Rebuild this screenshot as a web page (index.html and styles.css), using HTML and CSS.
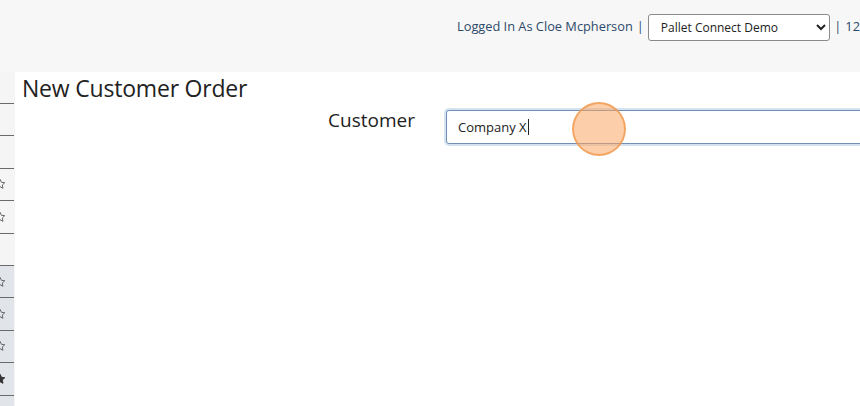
FILE: index.html
```html
<!DOCTYPE html>
<html>
<head>
  <meta charset="UTF-8">
  <title>New Customer Order</title>
  <link rel="stylesheet" href="styles.css">
</head>
<body>
  <div class="topbar">
    <span class="user">Logged In As Cloe Mcpherson</span>
    <span class="pipe">|</span>
    <select class="company">
      <option>Pallet Connect Demo</option>
    </select>
    <span class="pipe">|</span>
    <span class="user">12</span>
  </div>

  <div class="main">
    <div class="sidebar">
      <div class="nav-item"></div>
      <div class="nav-item"></div>
      <div class="nav-item"><svg class="star" viewBox="0 0 24 24"><path d="M12 2.5l2.9 6.1 6.6.8-4.9 4.6 1.3 6.6L12 17.3l-5.9 3.3 1.3-6.6-4.9-4.6 6.6-.8z"/></svg></div>
      <div class="nav-item"><svg class="star" viewBox="0 0 24 24"><path d="M12 2.5l2.9 6.1 6.6.8-4.9 4.6 1.3 6.6L12 17.3l-5.9 3.3 1.3-6.6-4.9-4.6 6.6-.8z"/></svg></div>
      <div class="nav-item"></div>
      <div class="nav-item shaded"><svg class="star" viewBox="0 0 24 24"><path d="M12 2.5l2.9 6.1 6.6.8-4.9 4.6 1.3 6.6L12 17.3l-5.9 3.3 1.3-6.6-4.9-4.6 6.6-.8z"/></svg></div>
      <div class="nav-item shaded"><svg class="star" viewBox="0 0 24 24"><path d="M12 2.5l2.9 6.1 6.6.8-4.9 4.6 1.3 6.6L12 17.3l-5.9 3.3 1.3-6.6-4.9-4.6 6.6-.8z"/></svg></div>
      <div class="nav-item shaded"><svg class="star" viewBox="0 0 24 24"><path d="M12 2.5l2.9 6.1 6.6.8-4.9 4.6 1.3 6.6L12 17.3l-5.9 3.3 1.3-6.6-4.9-4.6 6.6-.8z"/></svg></div>
      <div class="nav-item shaded"><svg class="star filled" viewBox="0 0 24 24"><path d="M12 2.5l2.9 6.1 6.6.8-4.9 4.6 1.3 6.6L12 17.3l-5.9 3.3 1.3-6.6-4.9-4.6 6.6-.8z"/></svg></div>
      <div class="nav-item shaded"><svg class="star" viewBox="0 0 24 24"><path d="M12 2.5l2.9 6.1 6.6.8-4.9 4.6 1.3 6.6L12 17.3l-5.9 3.3 1.3-6.6-4.9-4.6 6.6-.8z"/></svg></div>
    </div>

    <div class="content">
      <h1>New Customer Order</h1>
      <div class="form-row">
        <label for="customer">Customer</label>
        <div class="field">
          <input id="customer" type="text" value="Company X">
          <span class="caret"></span>
          <span class="click-marker"></span>
        </div>
      </div>
    </div>
  </div>
</body>
</html>
```

FILE: styles.css
```css
body * {
  box-sizing: border-box;
}

body {
  margin: 0;
  height: 406px;
  overflow: hidden;
  background: #f7f7f7;
  font-family: "Open Sans", "Liberation Sans", sans-serif;
  color: #2a2a2a;
}

.topbar {
  height: 72px;
  display: flex;
  align-items: flex-start;
  padding: 14px 0 0 457px;
  white-space: nowrap;
}

.user,
.pipe {
  font-size: 12.8px;
  line-height: 24px;
  color: #2d4a6a;
}

.pipe {
  margin: 0 4px 0 4px;
}

.company {
  width: 183px;
  height: 27px;
  padding: 0 8px;
  font-family: "Open Sans", "Liberation Sans", sans-serif;
  font-size: 12px;
  color: #222;
  background: #fff;
  border: 1px solid #8a8a8a;
  border-radius: 3px;
}

.main {
  display: flex;
  height: 334px;
}

.sidebar {
  flex: 0 0 15px;
  overflow: hidden;
  background: #f5f5f5;
  padding-top: 30px;
  border-top: 1px solid #f5f5f5;
}

.nav-item {
  width: 14px;
  height: 32.4px;
  border-top: 1px solid #6a6a6a;
  display: flex;
  align-items: center;
}

.nav-item.shaded {
  background: #e1e4e9;
}

.star {
  width: 12px;
  height: 12px;
  margin-left: -6px;
  fill: none;
  stroke: #666;
  stroke-width: 2;
}

.star.filled {
  fill: #333;
  stroke: #333;
}

.content {
  flex: 1;
  background: #fff;
  padding: 0 0 0 7px;
}

h1 {
  margin: 1px 0 0;
  font-size: 23px;
  font-weight: 400;
  line-height: 30px;
  color: #222;
  letter-spacing: -0.2px;
}

.form-row {
  display: flex;
  align-items: flex-start;
  margin-top: 5px;
}

label {
  width: 424px;
  padding-right: 31px;
  text-align: right;
  font-size: 19px;
  line-height: 24px;
  color: #222;
}

.field {
  position: relative;
  flex: 1;
  padding-top: 2px;
}

.field input {
  width: 440px;
  height: 34px;
  padding: 0 11px;
  font-family: "Open Sans", "Liberation Sans", sans-serif;
  font-size: 13px;
  color: #222;
  border: 1px solid #6f8fb3;
  border-radius: 3px;
  box-shadow: 0 0 0 2px #d5e2f0;
  outline: none;
}

.caret {
  position: absolute;
  left: 82px;
  top: 11px;
  width: 1px;
  height: 16px;
  background: #222;
}

.click-marker {
  position: absolute;
  left: 126px;
  top: -6px;
  width: 54px;
  height: 54px;
  border-radius: 50%;
  background: rgba(250, 165, 100, 0.55);
  border: 2px solid rgba(240, 150, 70, 0.7);
}
```
